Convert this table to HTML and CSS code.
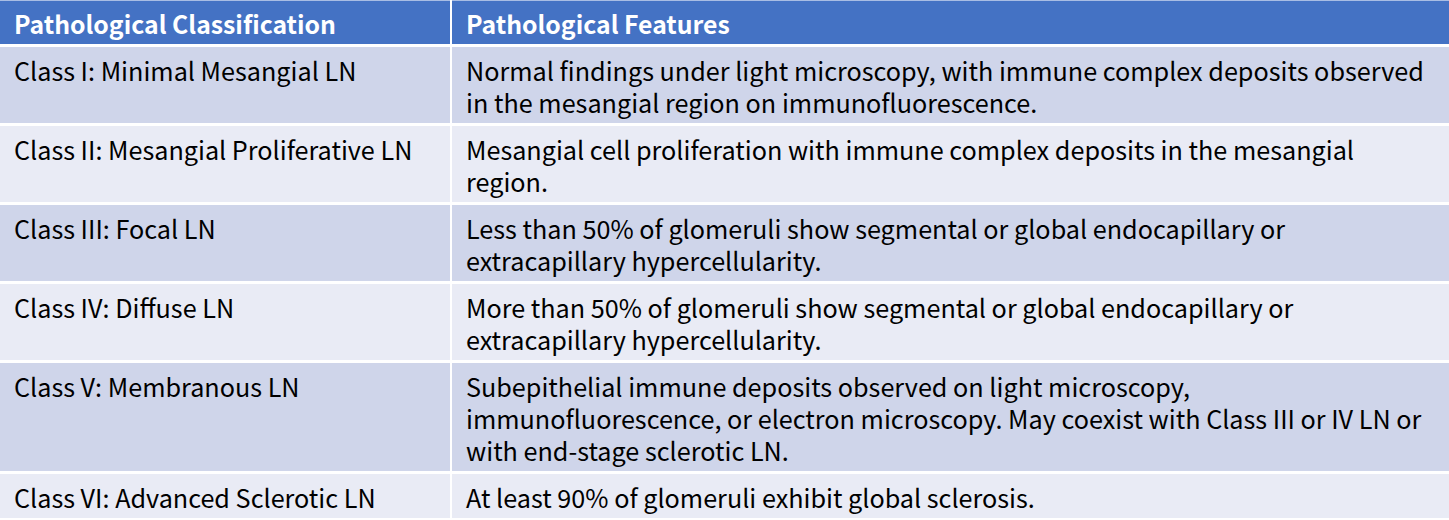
FILE: index.html
```html
<!DOCTYPE html>
<html>
<head>
<meta charset="utf-8">
<link rel="stylesheet" href="styles.css">
</head>
<body>
<table class="ln-table">
  <thead>
    <tr>
      <th class="col-class">Pathological Classification</th>
      <th class="col-feat">Pathological Features</th>
    </tr>
  </thead>
  <tbody>
    <tr class="odd">
      <td class="col-class">Class I: Minimal Mesangial LN</td>
      <td class="col-feat">Normal findings under light microscopy, with immune complex deposits observed<br>in the mesangial region on immunofluorescence.</td>
    </tr>
    <tr class="even">
      <td class="col-class">Class II: Mesangial Proliferative LN</td>
      <td class="col-feat">Mesangial cell proliferation with immune complex deposits in the mesangial<br>region.</td>
    </tr>
    <tr class="odd">
      <td class="col-class">Class III: Focal LN</td>
      <td class="col-feat">Less than 50% of glomeruli show segmental or global endocapillary or<br>extracapillary hypercellularity.</td>
    </tr>
    <tr class="even">
      <td class="col-class">Class IV: Diffuse LN</td>
      <td class="col-feat">More than 50% of glomeruli show segmental or global endocapillary or<br>extracapillary hypercellularity.</td>
    </tr>
    <tr class="odd">
      <td class="col-class">Class V: Membranous LN</td>
      <td class="col-feat">Subepithelial immune deposits observed on light microscopy,<br>immunofluorescence, or electron microscopy. May coexist with Class III or IV LN or<br>with end-stage sclerotic LN.</td>
    </tr>
    <tr class="even">
      <td class="col-class">Class VI: Advanced Sclerotic LN</td>
      <td class="col-feat">At least 90% of glomeruli exhibit global sclerosis.</td>
    </tr>
  </tbody>
</table>
</body>
</html>
```
FILE: styles.css
```css
html, body {
  margin: 0;
  padding: 0;
  background: #ffffff;
}

.ln-table {
  width: 1449px;
  border-collapse: collapse;
  table-layout: fixed;
  font-family: "Noto Sans CJK SC", "Noto Sans", sans-serif;
  font-size: 25.2px;
  line-height: 32px;
  color: #000000;
}

.ln-table th,
.ln-table td {
  padding: 7px 14px 5px 14px;
  text-align: left;
  vertical-align: top;
  white-space: nowrap;
  border-bottom: 3px solid #ffffff;
}

.ln-table th {
  background: #4472c4;
  color: #ffffff;
  font-weight: 700;
  font-size: 24.8px;
  height: 32px;
  border-top: 1px solid #a9bde4;
  padding-top: 6px;
}

.ln-table th.col-class,
.ln-table td.col-class {
  width: 422px;
}

.ln-table th.col-feat,
.ln-table td.col-feat {
  border-left: 2px solid #ffffff;
  padding-left: 14px;
}

.ln-table tr.odd td {
  background: #cfd5ea;
}

.ln-table tr.even td {
  background: #e9ebf5;
}
```
